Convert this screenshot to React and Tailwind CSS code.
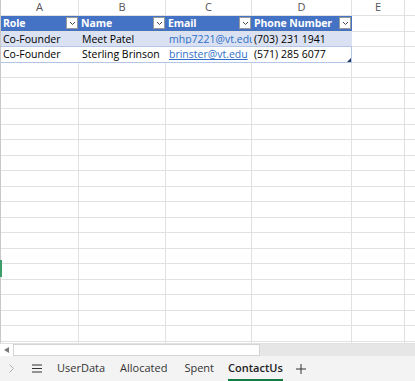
import React from "react";

const cols = [
  { w: "w-[78px]", l: "A" },
  { w: "w-[87px]", l: "B" },
  { w: "w-[86px]", l: "C" },
  { w: "w-[100px]", l: "D" },
  { w: "w-[53px]", l: "E" },
  { w: "w-[20px]", l: "" },
];

function Filter() {
  return (
    <span className="ml-auto mr-[1px] flex h-[12px] w-[12px] shrink-0 items-center justify-center border border-[#9a9a9a] bg-white">
      <svg width="7" height="5" viewBox="0 0 7 5">
        <path d="M1 1 L3.5 3.5 L6 1" stroke="#444" strokeWidth="1" fill="none" />
      </svg>
    </span>
  );
}

export default function App() {
  const emptyRows = Array.from({ length: 19 });
  return (
    <div
      className="relative flex h-[381px] w-[415px] flex-col overflow-hidden whitespace-nowrap bg-white text-[10.5px] text-black"
      style={{ fontFamily: '"Open Sans", "Noto Sans", sans-serif' }}
    >
      <div className="flex flex-1 flex-col overflow-hidden border-l border-[#c8c8c8]">
        {/* column letters */}
        <div className="flex h-[16px] shrink-0 border-b border-[#e1e1e1] bg-white text-[11px] text-[#555]">
          {cols.map((c, i) => (
            <div key={i} className={`${c.w} flex shrink-0 items-center justify-center border-r border-[#e1e1e1]`}>
              {c.l}
            </div>
          ))}
        </div>
        {/* table header */}
        <div className="flex h-[15.5px] shrink-0 border-b border-[#e1e1e1]">
          {["Role", "Name", "Email", "Phone Number"].map((t, i) => (
            <div key={i} className={`${cols[i].w} flex shrink-0 items-center bg-[#4472c4] pl-[2px] font-bold tracking-[-0.1px] text-white`}>
              <span className="leading-none">{t}</span>
              <Filter />
            </div>
          ))}
          <div className="w-[53px] shrink-0 border-r border-[#e1e1e1]" />
          <div className="w-[20px] shrink-0" />
        </div>
        {/* row 2 */}
        <div className="flex h-[15.5px] shrink-0">
          <div className="flex w-[351px] shrink-0 items-center border-b border-[#b4c6e7] bg-[#d9e1f2]">
            <div className="w-[78px] shrink-0 pl-[2px] leading-none">Co-Founder</div>
            <div className="w-[87px] shrink-0 pl-[3px] leading-none">Meet Patel</div>
            <div className="w-[86px] shrink-0 overflow-hidden pl-[3px] leading-none text-[#2f6fc7] underline">mhp7221@vt.edu</div>
            <div className="w-[100px] shrink-0 pl-[2px] leading-none">(703) 231 1941</div>
          </div>
          <div className="w-[53px] shrink-0 border-b border-r border-[#e1e1e1]" />
          <div className="w-[20px] shrink-0 border-b border-[#e1e1e1]" />
        </div>
        {/* row 3 */}
        <div className="flex h-[15.5px] shrink-0">
          <div className="relative flex w-[351px] shrink-0 items-center border-b border-r border-[#b4c6e7] bg-white">
            <div className="w-[78px] shrink-0 pl-[2px] leading-none">Co-Founder</div>
            <div className="w-[87px] shrink-0 pl-[3px] leading-none">Sterling Brinson</div>
            <div className="w-[86px] shrink-0 overflow-hidden pl-[3px] leading-none text-[#2f6fc7] underline">brinster@vt.edu</div>
            <div className="w-[100px] shrink-0 pl-[2px] leading-none">(571) 285 6077</div>
            <svg className="absolute bottom-0 right-0" width="4" height="4" viewBox="0 0 4 4">
              <path d="M4 0 L4 4 L0 4 Z" fill="#1f3864" />
            </svg>
          </div>
          <div className="w-[53px] shrink-0 border-b border-r border-[#e1e1e1]" />
          <div className="w-[20px] shrink-0 border-b border-[#e1e1e1]" />
        </div>
        {emptyRows.map((_, r) => (
          <div key={r} className="flex h-[15.5px] shrink-0 border-b border-[#e1e1e1]">
            {cols.map((c, i) => (
              <div key={i} className={`${c.w} shrink-0 ${i < 5 ? "border-r border-[#e1e1e1]" : ""}`} />
            ))}
          </div>
        ))}
      </div>
      {/* green row marker */}
      <div className="absolute left-0 top-[260px] h-[17px] w-[2px] bg-[#3c9e6a]" />
      {/* horizontal scrollbar */}
      <div className="flex h-[13px] shrink-0 border-t border-[#e1e1e1] bg-[#e6e6e6]">
        <div className="flex w-[13px] items-center justify-center bg-white">
          <svg width="5" height="6" viewBox="0 0 5 6">
            <path d="M5 0 L0 3 L5 6 Z" fill="#7a7a7a" />
          </svg>
        </div>
        <div className="w-[247px] border border-[#d4d4d4] bg-white" />
      </div>
      {/* sheet tabs */}
      <div className="flex h-[25px] shrink-0 items-center bg-[#f3f3f3] text-[11px] text-[#333]">
        <div className="ml-[9px] flex w-[6px] items-center">
          <svg width="5" height="9" viewBox="0 0 5 9">
            <path d="M0.5 0.5 L4.5 4.5 L0.5 8.5" stroke="#b0b0b0" strokeWidth="1" fill="none" />
          </svg>
        </div>
        <div className="ml-[17px] flex items-center">
          <svg width="10" height="9" viewBox="0 0 10 9">
            <path d="M0 1 H10 M0 4.5 H10 M0 8 H10" stroke="#333" strokeWidth="1.1" />
          </svg>
        </div>
        <div className="ml-[15px]">UserData</div>
        <div className="ml-[15px]">Allocated</div>
        <div className="ml-[17px]">Spent</div>
        <div className="relative ml-[14px] flex h-full items-center font-semibold text-[#222]">
          ContactUs
          <div className="absolute bottom-0 left-0 right-0 h-[2px] bg-[#107c41]" />
        </div>
        <div className="ml-[13px] flex items-center">
          <svg width="10" height="10" viewBox="0 0 10 10">
            <path d="M5 0 V10 M0 5 H10" stroke="#333" strokeWidth="1" />
          </svg>
        </div>
      </div>
    </div>
  );
}
